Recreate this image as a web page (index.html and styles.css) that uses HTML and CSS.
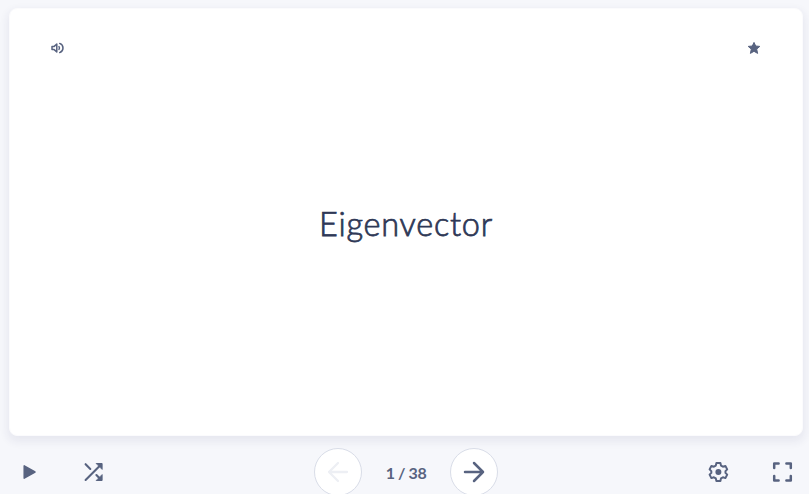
FILE: index.html
```html
<!DOCTYPE html>
<html lang="en">
<head>
<meta charset="utf-8">
<title>Flashcards</title>
<link rel="stylesheet" href="styles.css">
</head>
<body>
<main class="player">
  <section class="card">
    <header class="card-head">
      <button class="icon-btn" aria-label="Play audio">
        <svg width="14" height="14" viewBox="0 0 14 14" fill="none" stroke="currentColor" stroke-width="1.5" stroke-linejoin="round" stroke-linecap="round"><path d="M2 5.4H4.2L6.8 3V11L4.2 8.6H2Z"/><path d="M9 5.6Q10 7 9 8.4M9.7 2.4Q13 3.6 13 7T9.7 11.6"/></svg>
      </button>
      <button class="icon-btn" aria-label="Star">
        <svg width="14" height="14" viewBox="0 0 14 14" fill="currentColor" stroke="currentColor" stroke-width="1" stroke-linejoin="round"><path d="M7 1.4L8.7 5L12.8 5.4L9.7 8.1L10.6 12.4L7 10.3L3.4 12.4L4.3 8.1L1.2 5.4L5.3 5Z"/></svg>
      </button>
    </header>
    <div class="term"><span class="word">Eigenvector</span></div>
  </section>
  <footer class="toolbar">
    <div class="group">
      <button class="icon-btn tool" aria-label="Play">
        <svg width="24" height="24" viewBox="0 0 24 24" fill="currentColor" stroke="currentColor" stroke-width="1.5" stroke-linejoin="round"><path d="M6.2 5.8V18.2L17 12Z"/></svg>
      </button>
      <button class="icon-btn tool" aria-label="Shuffle">
        <svg width="24" height="24" viewBox="0 0 24 24" fill="none" stroke="currentColor" stroke-width="2.1" stroke-linecap="round"><path d="M3.6 20L18.6 5M3.6 4.2L8.3 8.9M14.4 15L18.6 19.2"/><path fill="currentColor" stroke-width="1" stroke-linejoin="round" d="M14.6 3.5H20.1V9ZM20.1 15V20.5H14.6Z"/></svg>
      </button>
    </div>
    <nav class="pager">
      <button class="round disabled" aria-label="Previous">
        <svg width="24" height="24" viewBox="0 0 24 24" fill="none" stroke="currentColor" stroke-width="2.3" stroke-linecap="round" stroke-linejoin="round"><path d="M21 12H3M12 3L3 12L12 21"/></svg>
      </button>
      <span class="count">1 / 38</span>
      <button class="round" aria-label="Next">
        <svg width="24" height="24" viewBox="0 0 24 24" fill="none" stroke="currentColor" stroke-width="2.5" stroke-linecap="round" stroke-linejoin="round"><path d="M3 12H21M12 3L21 12L12 21"/></svg>
      </button>
    </nav>
    <div class="group end">
      <button class="icon-btn tool" aria-label="Settings">
        <svg width="24" height="24" viewBox="0 0 24 24" fill="none" stroke="currentColor" stroke-width="2" stroke-linejoin="round"><path d="M10.4 3H14.4L15 5.6L16.9 6.7L19.4 5.9L21.2 9.4L19.5 11.1V12.9L21.2 14.6L19.4 18.1L16.9 17.3L15 18.4L14.4 21H10.4L9.8 18.4L7.9 17.3L5.4 18.1L3.6 14.6L5.3 12.9V11.1L3.6 9.4L5.4 5.9L7.9 6.7L9.8 5.6Z"/><circle cx="12.4" cy="12" r="3" fill="currentColor" stroke="none"/></svg>
      </button>
      <button class="icon-btn tool" aria-label="Full screen">
        <svg width="24" height="24" viewBox="0 0 24 24" fill="none" stroke="currentColor" stroke-width="2.5" stroke-linecap="round" stroke-linejoin="round"><path d="M4.2 8V3.6H8.6M16.4 3.6H20.8V8M20.8 16V20.4H16.4M8.6 20.4H4.2V16"/></svg>
      </button>
    </div>
  </footer>
</main>
</body>
</html>
```
FILE: styles.css
```css
* { box-sizing: border-box; }

body {
  margin: 0;
  height: 494px;
  overflow: hidden;
  background: #f6f7fb;
  color: #586380;
  font-family: Lato, "Liberation Sans", sans-serif;
}

button {
  padding: 0;
  border: 0;
  background: none;
  color: inherit;
  font: inherit;
}

svg { display: block; }

.player { padding: 8px 6px 0 9px; }

.card {
  display: flex;
  flex-direction: column;
  height: 428px;
  border: 1px solid #fbfbfd;
  border-radius: 8px;
  background: #fff;
  box-shadow: 0 4px 8px 2px rgba(40, 46, 94, .07);
}

.card-head {
  display: flex;
  justify-content: space-between;
  padding: 32px 41px 0 40px;
}

.term {
  display: flex;
  flex: 1;
  align-items: center;
  justify-content: center;
  padding-bottom: 43px;
}

.word {
  color: #2e3856;
  font-size: 32.5px;
  font-weight: 300;
  letter-spacing: .75px;
  -webkit-text-stroke: .75px #2e3856;
}

.toolbar {
  display: grid;
  grid-template-columns: 1fr auto 1fr;
  align-items: center;
  height: 48px;
  margin-top: 12px;
}

.group {
  display: flex;
  gap: 40px;
  padding-left: 8.7px;
}

.group.end {
  justify-content: flex-end;
  padding: 0 9px 0 0;
}

.pager {
  display: flex;
  align-items: center;
}

.round {
  display: grid;
  place-items: center;
  width: 48px;
  height: 48px;
  border: 1px solid #d9dde8;
  border-radius: 50%;
  background: #fff;
}

.disabled svg { color: #edeff4; }

.count {
  width: 88px;
  text-align: center;
  font-size: 16px;
  font-weight: 700;
  letter-spacing: -.4px;
}
```
